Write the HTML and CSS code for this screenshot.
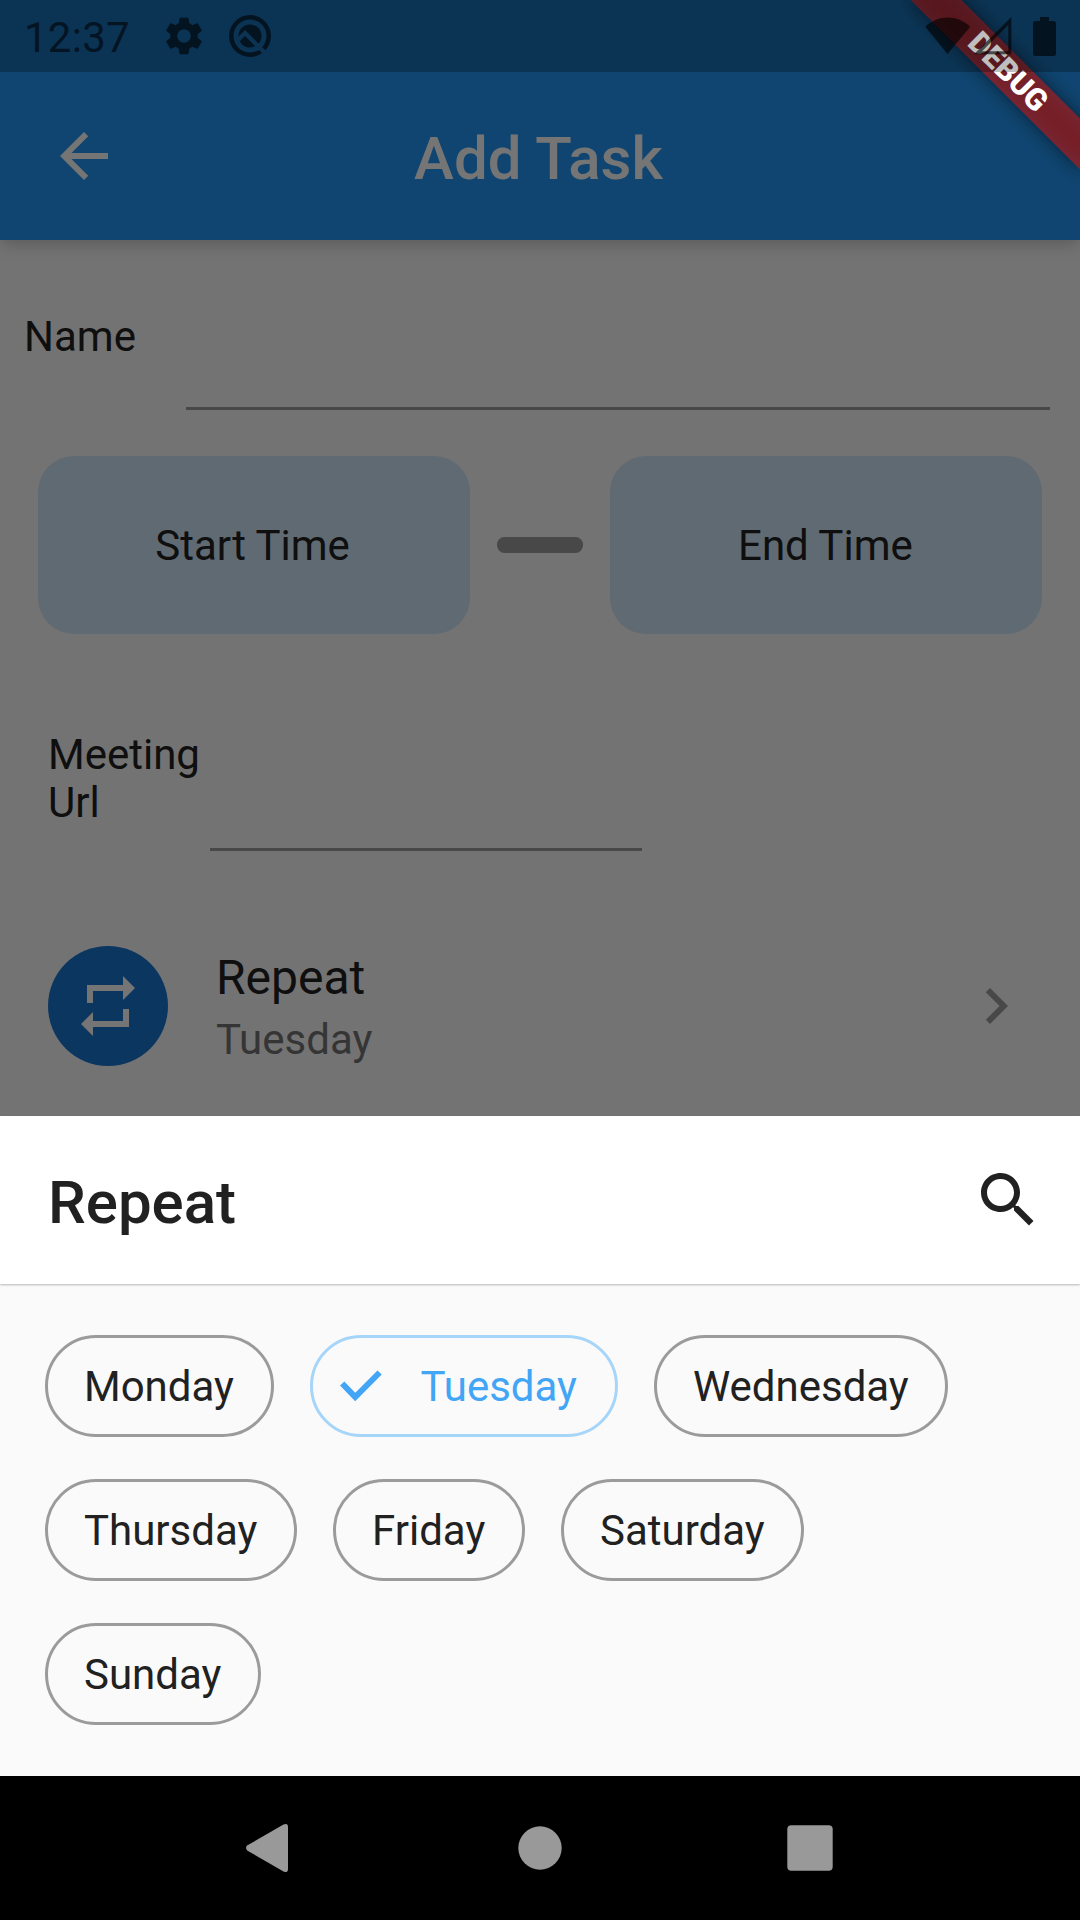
FILE: index.html
```html
<!DOCTYPE html>
<html lang="en">
<head>
<meta charset="utf-8">
<title>Add Task</title>
<link rel="stylesheet" href="styles.css">
</head>
<body>
<div class="screen">
  <div class="page">
    <header class="appbar">
      <svg class="icon" viewBox="0 0 24 24"><path d="M20 11H7.83l5.59-5.59L12 4l-8 8 8 8 1.41-1.41L7.83 13H20v-2z"/></svg>
      <h1 class="title">Add Task</h1>
    </header>
    <main class="form">
      <div class="field name-field">
        <label class="label">Name</label>
        <div class="input"></div>
      </div>
      <div class="times">
        <div class="time">Start Time</div>
        <div class="dash"></div>
        <div class="time">End Time</div>
      </div>
      <div class="field url-field">
        <label class="label">Meeting Url</label>
        <div class="input"></div>
      </div>
      <div class="tile">
        <div class="avatar"><svg class="icon" viewBox="0 0 24 24"><path d="M7 7h10v3l4-4-4-4v3H5v6h2V7zm10 10H7v-3l-4 4 4 4v-3h12v-6h-2v4z"/></svg></div>
        <div class="tile-text">
          <div class="tile-title">Repeat</div>
          <div class="tile-sub">Tuesday</div>
        </div>
        <svg class="icon chevron" viewBox="0 0 24 24"><path d="M10 6L8.59 7.41 13.17 12l-4.58 4.59L10 18l6-6z"/></svg>
      </div>
    </main>
  </div>
  <div class="scrim"></div>
  <section class="sheet">
    <header class="sheet-head">
      <h2 class="title">Repeat</h2>
      <svg class="icon" viewBox="0 0 24 24"><path d="M15.5 14h-.79l-.28-.27C15.41 12.59 16 11.11 16 9.5 16 5.91 13.09 3 9.5 3S3 5.91 3 9.5 5.91 16 9.5 16c1.61 0 3.09-.59 4.23-1.57l.27.28v.79l5 4.99L20.49 19l-4.99-5zm-6 0C7.01 14 5 11.99 5 9.5S7.01 5 9.5 5 14 7.01 14 9.5 11.99 14 9.5 14z"/></svg>
    </header>
    <div class="chips">
      <div class="chip">Monday</div>
      <div class="chip selected"><svg class="check" viewBox="0 0 42 32"><path d="M2.2 13.5L15.2 27L39.6 2.5"/></svg>Tuesday</div>
      <div class="chip">Wednesday</div>
      <div class="chip">Thursday</div>
      <div class="chip">Friday</div>
      <div class="chip">Saturday</div>
      <div class="chip">Sunday</div>
    </div>
  </section>
  <div class="ribbon-clip"><div class="ribbon"><span>DEBUG</span></div></div>
  <div class="statusbar">
    <span class="clock">12:37</span>
    <svg class="gear" viewBox="2 2 20 20"><path d="M19.14 12.94c.04-.3.06-.61.06-.94s-.02-.64-.07-.94l2.03-1.58a.49.49 0 0 0 .12-.61l-1.92-3.32a.49.49 0 0 0-.59-.22l-2.39.96c-.5-.38-1.03-.7-1.62-.94l-.36-2.54a.48.48 0 0 0-.48-.41h-3.84c-.24 0-.43.17-.47.41l-.36 2.54c-.59.24-1.13.57-1.62.94l-2.39-.96a.48.48 0 0 0-.59.22L2.74 8.87c-.12.21-.08.47.12.61l2.03 1.58c-.05.3-.09.63-.09.94s.02.64.07.94l-2.03 1.58a.49.49 0 0 0-.12.61l1.92 3.32c.12.22.37.29.59.22l2.39-.96c.5.38 1.03.7 1.62.94l.36 2.54c.05.24.24.41.48.41h3.84c.24 0 .44-.17.47-.41l.36-2.54c.59-.24 1.13-.56 1.62-.94l2.39.96c.22.08.47 0 .59-.22l1.92-3.32a.48.48 0 0 0-.12-.61l-2.01-1.58zM12 15.6A3.6 3.6 0 1 1 12 8.4a3.6 3.6 0 0 1 0 7.2z"/></svg>
    <svg class="q-icon" viewBox="0 0 42 42">
      <mask id="slash"><rect width="42" height="42" fill="#fff"/><path d="M7.500 26.500L16 18L38 40" fill="none" stroke="#000" stroke-width="4.200"/></mask>
      <g mask="url(#slash)"><circle class="ring" cx="21" cy="21" r="18.700"/><circle cx="21" cy="21" r="11.500"/></g>
    </svg>
    <span class="spacer"></span>
    <svg class="wifi" viewBox="0 0 46 38"><path d="M0.3 9.8C13-2.6 32.5-2.6 45.2 9.8L22.5 37z"/></svg>
    <svg class="signal" viewBox="0 0 38 38"><path d="M37.3 0v37.3H0zM34.3 8L8 34.3h26.3z" fill-rule="evenodd"/></svg>
    <svg class="battery" viewBox="0 0 23 39"><path d="M7 0h9v4h4.500a2.500 2.500 0 0 1 2.500 2.500V36.500a2.500 2.500 0 0 1-2.500 2.500H2.500A2.500 2.500 0 0 1 0 36.500V6.500A2.500 2.500 0 0 1 2.500 4H7z"/></svg>
  </div>
  <nav class="navbar">
    <svg class="nav-icon" viewBox="0 0 60 60"><path d="M7.500 27.300L43.500 6.600Q48 4.500 48 9V51Q48 55.500 43.500 53.400L7.500 32.700Q4.500 30 7.500 27.300z"/></svg>
    <svg class="nav-icon" viewBox="0 0 60 60"><circle cx="30" cy="30" r="21.700"/></svg>
    <svg class="nav-icon" viewBox="0 0 60 60"><rect x="7.300" y="7.300" width="45.400" height="45.400" rx="4"/></svg>
  </nav>
</div>
</body>
</html>
```
FILE: styles.css
```css
* { box-sizing: border-box; }
body { margin: 0; font-family: Roboto, "Liberation Sans", sans-serif; font-size: 42px; line-height: 48px; color: #212121; }
h1, h2 { margin: 0; }
.screen { position: relative; width: 1080px; height: 1920px; overflow: hidden; background: #fafafa; display: flex; flex-direction: column; justify-content: flex-end; }
.icon { width: 72px; height: 72px; flex: none; display: block; fill: currentColor; }
.title { font-size: 60px; line-height: 72px; font-weight: 500; padding-top: 5px; }

/* Task form under the scrim */
.page { position: absolute; inset: 0; background: #fafafa; }
.appbar { position: relative; height: 240px; padding: 72px 48px 0; background: #2196f3; color: #fff; display: grid; grid-template-columns: 72px 1fr 72px; align-items: center; box-shadow: 0 6px 12px -3px rgba(0,0,0,.12), 0 6px 18px rgba(0,0,0,.1); }
.appbar .title { text-align: center; padding-right: 3px; letter-spacing: 0.1px; }
.field { display: flex; align-items: center; }
.label { width: 162px; flex: none; }
.input { border-bottom: 3px solid #9e9e9e; }
.name-field { height: 216px; padding: 0 30px 0 24px; align-items: flex-start; }
.name-field .label { padding-top: 73px; }
.name-field .input { flex: 1; height: 169.500px; }
.times { display: flex; justify-content: space-around; align-items: center; padding: 0 24px; height: 177.600px; }
.time { width: 432px; height: 100%; border-radius: 36px; background: #d1e7f9; display: flex; align-items: center; justify-content: center; padding: 3px 2px 0 0; }
.dash { width: 86.400px; height: 15.600px; border-radius: 7.500px; background: #9e9e9e; }
.url-field { height: 217.400px; padding: 0 48px; align-items: flex-start; }
.url-field .label { padding-top: 97px; }
.url-field .input { width: 432px; height: 100%; }
.tile { display: flex; align-items: center; padding: 95px 48px 0; }
.avatar { width: 120px; height: 120px; border-radius: 50%; background: #1976d2; color: #fff; display: flex; align-items: center; justify-content: center; }
.tile-text { flex: 1; padding: 2px 0 0 48px; }
.tile-title { font-size: 48px; line-height: 56px; padding-bottom: 10px; }
.tile-sub { color: #757575; }
.chevron { color: #9e9e9e; }
.scrim { position: absolute; inset: 0; background: rgba(0,0,0,.54); }

/* Bottom sheet */
.sheet { position: relative; height: 660px; background: #fafafa; }
.sheet-head { position: relative; height: 168px; padding: 0 36px 0 48px; background: #fff; display: flex; align-items: center; justify-content: space-between; box-shadow: 0 1px 2px rgba(0,0,0,.27); }
.chips { display: flex; flex-wrap: wrap; gap: 42px 36px; padding: 51px 45px 0; }
.chip { height: 102px; padding: 1px 36.700px 0 36px; border: 3px solid #9b9b9b; border-radius: 51px; display: flex; align-items: center; }
.chip.selected { color: #42a5f5; border-color: #a6d5fa; padding-left: 27.500px; padding-right: 38px; }
.check { width: 42px; height: 32px; margin: 0 38.500px 2px 0; fill: none; stroke: currentColor; stroke-width: 6; }

/* Corner ribbon */
.ribbon-clip { position: absolute; top: 0; right: 0; width: 240px; height: 240px; overflow: hidden; }
.ribbon { position: absolute; left: 47.900px; top: 54.100px; width: 240px; height: 36px; transform: rotate(45deg); display: flex; align-items: center; justify-content: center; color: #fff; font-size: 30.600px; line-height: 36px; font-weight: 900; }
.ribbon::before { content: ""; position: absolute; inset: 0; background: rgba(0,0,0,.5); filter: blur(9px); }
.ribbon::after { content: ""; position: absolute; inset: 0; background: rgba(183,28,28,.627); }
.ribbon span { position: relative; z-index: 1; }

/* System bars */
.statusbar { position: absolute; left: 0; top: 0; width: 1080px; height: 72px; padding: 0 24px; background: rgba(0,0,0,.25); color: rgba(0,0,0,.62); fill: rgba(0,0,0,.62); display: flex; align-items: center; }
.clock { width: 141px; padding-top: 3px; letter-spacing: 0.25px; }
.gear { width: 38px; height: 38px; }
.q-icon { width: 42px; height: 42px; margin-left: 26px; }
.q-icon .ring { fill: none; stroke: rgba(0,0,0,.62); stroke-width: 4.500; }
.spacer { flex: 1; }
.wifi { width: 46px; height: 38px; margin-right: 3px; }
.signal { width: 38px; height: 38px; margin-right: 21px; }
.battery { width: 23px; height: 39px; }
.navbar { position: relative; height: 144px; padding: 0 240px; background: #000; fill: #999; display: flex; align-items: center; justify-content: space-between; }
.nav-icon { width: 60px; height: 60px; }
```
